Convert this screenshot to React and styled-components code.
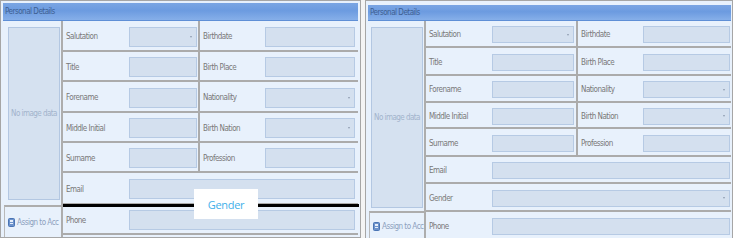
import React from "react";
import styled, { createGlobalStyle, css } from "styled-components";

const Global = createGlobalStyle`
  html, body { margin: 0; padding: 0; background: #ffffff; overflow: hidden; }
  body { font-family: "DejaVu Sans Condensed", "Liberation Sans", sans-serif; }
`;

const Page = styled.div`
  display: flex;
  gap: 4px;
  width: 733px;
  height: 238px;
  overflow: hidden;
  background: #f4f4f4;
`;

const Panel = styled.section`
  position: relative;
  box-sizing: border-box;
  width: ${(p) => p.$w}px;
  height: ${(p) => p.$h}px;
  flex: none;
  border: 1px solid #a6a6a6;
  background: #e8f1fc;
  padding: ${(p) => p.$pt}px ${(p) => p.$pr}px 0 2px;
  display: flex;
  flex-direction: column;
`;

const Header = styled.div`
  height: ${(p) => p.$h}px;
  line-height: ${(p) => p.$h}px;
  flex: none;
  box-sizing: border-box;
  padding-left: 2px;
  background: linear-gradient(#7aa5e3, #6c9be0 45%, #86afe9);
  border-bottom: 1px solid #5f8fd6;
  color: #3f5f92;
  font-size: 8px;
  letter-spacing: -0.5px;
  white-space: nowrap;
`;

const Body = styled.div`
  display: flex;
  flex: 1;
  min-height: 0;
`;

const Side = styled.div`
  width: ${(p) => p.$w}px;
  flex: none;
  box-sizing: border-box;
  border-right: 2px solid #adadad;
  display: flex;
  flex-direction: column;
`;

const ImageArea = styled.div`
  flex: 1;
  display: flex;
  min-width: 0;
  padding: 6px 1px ${(p) => p.$pb}px ${(p) => p.$pl}px;
`;

const ImageBox = styled.div`
  flex: 1;
  min-width: 0;
  box-sizing: border-box;
  border: 1px solid #b3c7e2;
  background: #d5e1f0;
  display: flex;
  align-items: center;
  justify-content: center;
  color: #a2b3cc;
  font-size: 8px;
  letter-spacing: -0.55px;
  white-space: nowrap;
  overflow: hidden;
`;

const AssignCell = styled.div`
  height: ${(p) => p.$h}px;
  flex: none;
  box-sizing: border-box;
  border-top: 2px solid #adadad;
  border-left: 1px solid #b9b9b9;
  margin-left: 1px;
  display: flex;
  align-items: center;
  gap: 2px;
  padding-left: 3px;
  color: #8c9fbd;
  font-size: 8px;
  letter-spacing: -0.5px;
  white-space: nowrap;
  overflow: hidden;

  svg { flex: none; }
`;

const Form = styled.div`
  flex: 1;
  display: flex;
  flex-direction: column;
`;

const Row = styled.div`
  height: ${(p) => p.$h}px;
  flex: none;
  box-sizing: border-box;
  border-bottom: 2px solid #ababab;
  display: flex;
`;

const Cell = styled.div`
  ${(p) => (p.$w ? css`width: ${p.$w}px; flex: none;` : css`flex: 1;`)}
  box-sizing: border-box;
  display: flex;
  align-items: center;
  padding-top: 2px;
  padding-right: ${(p) => p.$pr}px;
  ${(p) => p.$sep && css`border-left: 2px solid #ababab;`}
`;

const Label = styled.span`
  width: ${(p) => p.$w}px;
  flex: none;
  box-sizing: border-box;
  padding-left: 3px;
  color: #787878;
  font-size: 8px;
  letter-spacing: -0.5px;
  white-space: nowrap;
`;

const Input = styled.div`
  position: relative;
  ${(p) => (p.$w ? css`width: ${p.$w}px; flex: none;` : css`flex: 1;`)}
  height: ${(p) => p.$h}px;
  box-sizing: border-box;
  border: 1px solid #b6cae4;
  background: #d4e0ef;
  ${(p) =>
    p.$select &&
    css`
      &::after {
        content: "";
        position: absolute;
        right: 4px;
        top: 50%;
        margin-top: -1px;
        border-left: 1.5px solid transparent;
        border-right: 1.5px solid transparent;
        border-top: 2px solid #8d9bb0;
      }
    `}
`;

const Annotation = styled.div`
  position: absolute;
  left: 62px;
  right: 1px;
  top: 203px;
  height: 3px;
  background: #000;
`;

const GenderTag = styled.div`
  position: absolute;
  left: 193px;
  top: 188px;
  width: 64px;
  height: 30px;
  background: #ffffff;
  display: flex;
  align-items: center;
  justify-content: center;
  color: #3fb0ea;
  font-family: "Open Sans", "Liberation Sans", sans-serif;
  font-size: 11px;
  letter-spacing: -0.3px;
`;

const AssignIcon = () => (
  <svg width="7" height="9" viewBox="0 0 7 9">
    <rect x="0.5" y="0.5" width="6" height="8" rx="1" fill="#6d93cc" stroke="#4a74b4" />
    <rect x="2" y="2" width="3" height="2" fill="#e6eefa" />
    <rect x="2" y="5" width="3" height="1" fill="#e6eefa" />
  </svg>
);

const leftRows = [
  { h: 31, cells: [["Salutation", true], ["Birthdate", false]] },
  { h: 30, cells: [["Title", false], ["Birth Place", false]] },
  { h: 31, cells: [["Forename", false], ["Nationality", true]] },
  { h: 30, cells: [["Middle Initial", false], ["Birth Nation", true]] },
  { h: 30, cells: [["Surname", false], ["Profession", false]] },
  { h: 32, wide: ["Email", false] },
  { h: 30, wide: ["Phone", false] },
];

const rightRows = [
  { h: 27, cells: [["Salutation", true], ["Birthdate", false]] },
  { h: 28, cells: [["Title", false], ["Birth Place", false]] },
  { h: 27, cells: [["Forename", false], ["Nationality", true]] },
  { h: 26, cells: [["Middle Initial", false], ["Birth Nation", true]] },
  { h: 28, cells: [["Surname", false], ["Profession", false]] },
  { h: 27, wide: ["Email", false] },
  { h: 28, wide: ["Gender", true] },
  { h: 28, wide: ["Phone", false] },
];

function DetailsPanel({ cfg, rows, children }) {
  return (
    <Panel $w={cfg.w} $h={cfg.h} $pt={cfg.pt} $pr={cfg.pr}>
      <Header $h={cfg.headerH}>Personal Details</Header>
      <Body>
        <Side $w={cfg.sideW}>
          <ImageArea $pl={cfg.imgPl} $pb={cfg.imgPb}>
            <ImageBox>No image data</ImageBox>
          </ImageArea>
          <AssignCell $h={cfg.assignH}>
            <AssignIcon />
            <span>Assign to Acc</span>
          </AssignCell>
        </Side>
        <Form>
          {rows.map((r, i) => (
            <Row key={i} $h={r.h}>
              {r.cells ? (
                <>
                  <Cell $w={cfg.pair1} $pr={cfg.pr1}>
                    <Label $w={cfg.lbl1}>{r.cells[0][0]}</Label>
                    <Input $h={cfg.inH} $select={r.cells[0][1]} />
                  </Cell>
                  <Cell $sep $pr={cfg.pr2}>
                    <Label $w={cfg.lbl2}>{r.cells[1][0]}</Label>
                    <Input $h={cfg.inH} $select={r.cells[1][1]} />
                  </Cell>
                </>
              ) : (
                <Cell $pr={cfg.pr2}>
                  <Label $w={cfg.lbl1}>{r.wide[0]}</Label>
                  <Input $h={cfg.inH} $select={r.wide[1]} />
                </Cell>
              )}
            </Row>
          ))}
        </Form>
      </Body>
      {children}
    </Panel>
  );
}

const leftCfg = {
  w: 361, h: 238, pt: 2, pr: 2, headerH: 18, sideW: 60, imgPl: 5, imgPb: 5,
  assignH: 32, pair1: 135, pr1: 1, pr2: 3, lbl1: 66, lbl2: 65, inH: 20,
};

const rightCfg = {
  w: 368, h: 240, pt: 4, pr: 1, headerH: 16, sideW: 58, imgPl: 3, imgPb: 3,
  assignH: 28, pair1: 150, pr1: 2, pr2: 1, lbl1: 66, lbl2: 65, inH: 17,
};

export default function App() {
  return (
    <>
      <Global />
      <Page>
        <DetailsPanel cfg={leftCfg} rows={leftRows}>
          <Annotation />
          <GenderTag>Gender</GenderTag>
        </DetailsPanel>
        <DetailsPanel cfg={rightCfg} rows={rightRows} />
      </Page>
    </>
  );
}
